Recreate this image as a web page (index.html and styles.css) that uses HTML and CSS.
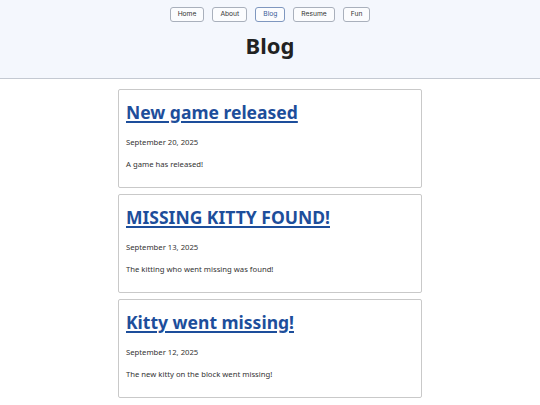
FILE: index.html
```html
<!DOCTYPE html>
<html lang="en">
<head>
<meta charset="utf-8">
<title>Blog</title>
<link rel="stylesheet" href="styles.css">
</head>
<body>
<header class="site-header">
  <nav class="nav">
    <a class="nav-btn" href="#">Home</a>
    <a class="nav-btn" href="#">About</a>
    <a class="nav-btn active" href="#">Blog</a>
    <a class="nav-btn" href="#">Resume</a>
    <a class="nav-btn" href="#">Fun</a>
  </nav>
  <h1 class="page-title">Blog</h1>
</header>
<main class="posts">
  <article class="post">
    <h2 class="post-title"><a href="#">New game released</a></h2>
    <p class="post-date">September 20, 2025</p>
    <p class="post-body">A game has released!</p>
  </article>
  <article class="post">
    <h2 class="post-title"><a href="#">MISSING KITTY FOUND!</a></h2>
    <p class="post-date">September 13, 2025</p>
    <p class="post-body">The kitting who went missing was found!</p>
  </article>
  <article class="post">
    <h2 class="post-title"><a href="#">Kitty went missing!</a></h2>
    <p class="post-date">September 12, 2025</p>
    <p class="post-body">The new kitty on the block went missing!</p>
  </article>
</main>
</body>
</html>
```
FILE: styles.css
```css
* { box-sizing: border-box; }
html, body { margin: 0; padding: 0; background: #ffffff; }
body {
  font-family: "Noto Sans", "DejaVu Sans", sans-serif;
  color: #222;
}
.site-header {
  background: #f4f7fd;
  border-bottom: 1px solid #c4c9d2;
  padding-top: 7px;
  height: 79px;
}
.nav {
  display: flex;
  justify-content: center;
  gap: 8px;
}
.nav-btn {
  display: block;
  height: 15px;
  line-height: 13px;
  padding: 0 7px;
  font-family: "Inter", "Noto Sans", sans-serif;
  font-size: 6.7px;
  color: #333;
  text-decoration: none;
  background: #fbfcfe;
  border: 1px solid #a9b0bc;
  border-radius: 3px;
}
.nav-btn.active {
  color: #3b5f9a;
  border-color: #7f97bf;
}
.page-title {
  margin: 8px 0 0;
  text-align: center;
  font-size: 22px;
  line-height: 30px;
  font-weight: 700;
  color: #222;
}
.posts {
  width: 304px;
  margin: 10px auto 0;
  display: flex;
  flex-direction: column;
  gap: 6px;
}
.post {
  border: 1px solid #c9c9c9;
  border-radius: 2px;
  height: 99px;
  padding: 8px 7px 0;
}
.post-title {
  margin: 0;
  font-size: 17.5px;
  line-height: 28px;
  font-weight: 700;
}
.post-title a {
  color: #1d4e9b;
  text-decoration: underline;
  text-decoration-thickness: 2px;
  text-underline-offset: 2px;
}
.post-date {
  margin: 10px 0 0;
  font-size: 7.7px;
  line-height: 12px;
  color: #333;
}
.post-body {
  margin: 10px 0 0;
  font-size: 7.7px;
  line-height: 12px;
  color: #333;
}
```
